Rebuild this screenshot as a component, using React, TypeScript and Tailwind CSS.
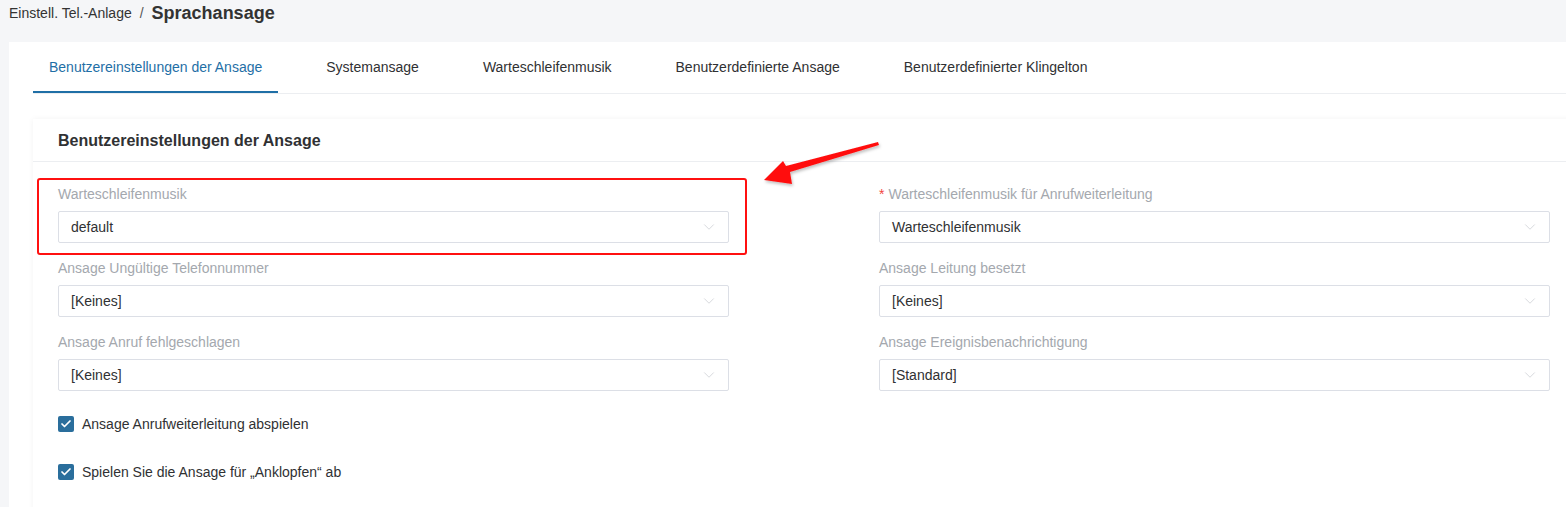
import { ChevronDown, Check } from "lucide-react";

const tabs = [
  "Benutzereinstellungen der Ansage",
  "Systemansage",
  "Warteschleifenmusik",
  "Benutzerdefinierte Ansage",
  "Benutzerdefinierter Klingelton",
];

const fields = [
  { label: "Warteschleifenmusik", value: "default" },
  { label: "Warteschleifenmusik für Anrufweiterleitung", value: "Warteschleifenmusik", required: true },
  { label: "Ansage Ungültige Telefonnummer", value: "[Keines]" },
  { label: "Ansage Leitung besetzt", value: "[Keines]" },
  { label: "Ansage Anruf fehlgeschlagen", value: "[Keines]" },
  { label: "Ansage Ereignisbenachrichtigung", value: "[Standard]" },
];

function Select({ value }: { value: string }) {
  return (
    <div className="flex h-[32px] items-center justify-between rounded-[2px] border border-[#dcdfe6] bg-white pl-[12px] pr-[10px]">
      <span className="text-[14px] text-[#303133]">{value}</span>
      <ChevronDown className="h-[18px] w-[18px] text-[#c9ccd2]" strokeWidth={1} />
    </div>
  );
}

function CheckRow({ text }: { text: string }) {
  return (
    <label className="flex h-[48px] items-center gap-[8px]">
      <span className="flex h-[16px] w-[16px] items-center justify-center rounded-[2px] bg-[#2a6e9c]">
        <Check className="h-[12px] w-[12px] text-white" strokeWidth={3.5} />
      </span>
      <span className="text-[14px] text-[#303133]">{text}</span>
    </label>
  );
}

export default function App() {
  return (
    <div
      className="relative h-[507px] w-[1566px] overflow-hidden bg-[#f5f6f8]"
      style={{ fontFamily: '"Liberation Sans", Arial, sans-serif' }}
    >
      <div className="flex h-[26px] items-center gap-[8px] pl-[9px]">
        <span className="text-[14px] text-[#333]">Einstell. Tel.-Anlage</span>
        <span className="text-[14px] text-[#555]">/</span>
        <span className="text-[18px] font-bold text-[#333]">Sprachansage</span>
      </div>

      <div className="ml-[9px] mt-[16px] w-[1600px] bg-white pl-[24px]">
        <div className="flex h-[52px] gap-[32px] border-b border-[#eceef1]">
          {tabs.map((t, i) => (
            <div
              key={t}
              className={
                i === 0
                  ? "flex items-center border-b-2 border-[#1f6fa6] px-[16px] pt-[2px] text-[14px] text-[#1f6fa6]"
                  : "flex items-center px-[16px] text-[14px] text-[#303133]"
              }
            >
              {t}
            </div>
          ))}
        </div>

        <div className="pt-[25px]">
          <div className="w-[1542px] bg-white shadow-[0_0_6px_rgba(0,0,0,0.05)]">
            <div className="flex h-[43px] items-center border-b border-[#eceef1] pl-[25px] pt-[1px] text-[16px] font-bold text-[#303133]">
              Benutzereinstellungen der Ansage
            </div>
            <div className="px-[25px] pt-[22px] pb-[20px]">
              <div className="grid grid-cols-2 gap-x-[150px]">
                {fields.map((f) => (
                  <div key={f.label} className="pb-[15px]">
                    <div className="mb-[7px] flex h-[20px] items-center text-[14px] text-[#a4a8ae]">
                      {f.required && <span className="mr-[4px] text-[#f2463d]">*</span>}
                      {f.label}
                    </div>
                    <Select value={f.value} />
                  </div>
                ))}
              </div>
              <div className="-mt-[6px]">
                <CheckRow text="Ansage Anrufweiterleitung abspielen" />
                <CheckRow text="Spielen Sie die Ansage für „Anklopfen“ ab" />
              </div>
            </div>
          </div>
        </div>
      </div>

      {/* annotation */}
      <div className="absolute left-[37px] top-[178px] h-[77px] w-[710px] rounded-[3px] border-2 border-[#ff1010]" />
      <svg className="absolute left-0 top-0" width="1566" height="507" viewBox="0 0 1566 507">
        <defs>
          <filter id="sh" x="-20%" y="-20%" width="140%" height="140%">
            <feDropShadow dx="1" dy="2" stdDeviation="1.5" floodColor="#000" floodOpacity="0.25" />
          </filter>
        </defs>
        <polygon
          points="878,142 879,145 790,172 792,184 764,180 783,161 786,166"
          fill="#ff1010"
          filter="url(#sh)"
        />
      </svg>
    </div>
  );
}
